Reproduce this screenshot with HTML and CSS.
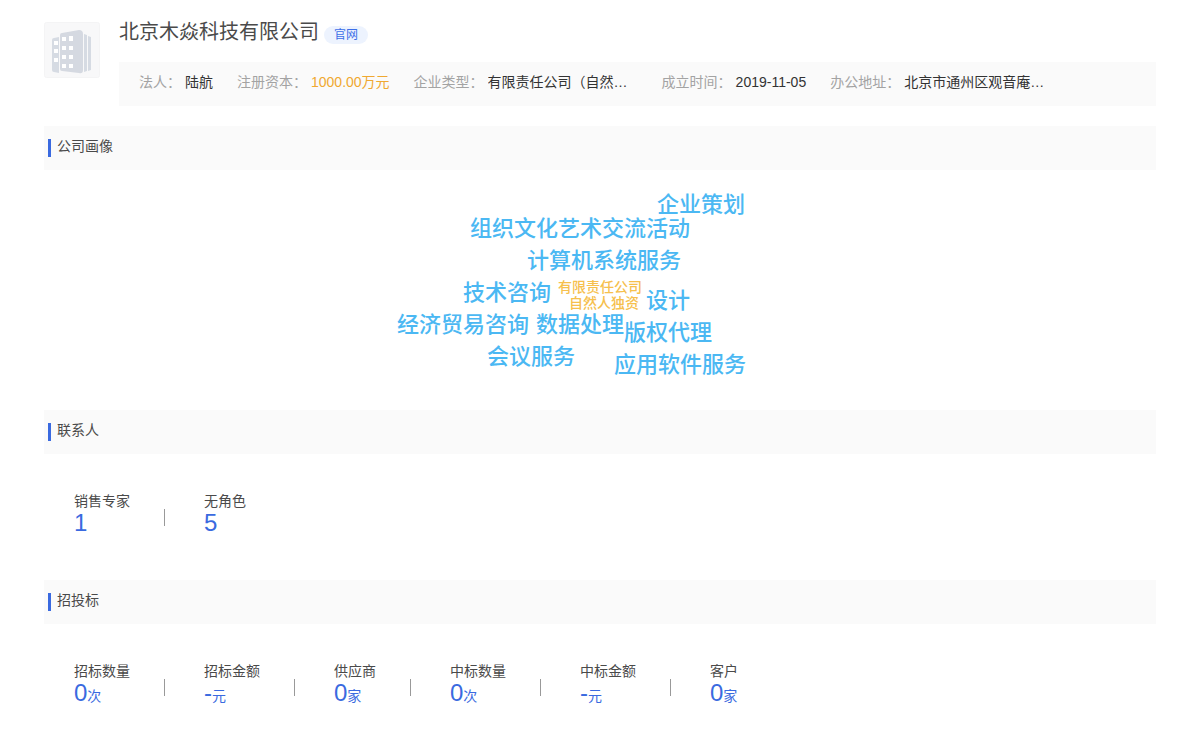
FILE: index.html
```html
<!DOCTYPE html>
<html lang="zh-CN">
<head>
<meta charset="utf-8">
<title>北京木焱科技有限公司</title>
<link rel="stylesheet" href="styles.css">
</head>
<body>
<main class="page">
  <header class="company">
    <svg class="logo" viewBox="0 0 56 56" aria-hidden="true">
      <rect x=".5" y=".5" width="55" height="55" rx="2" fill="#f8f8f9" stroke="#f4f4f5"/>
      <path d="M8 18q0-2 2-2l5-1v36l-5-1q-2 0-2-2z" fill="#d6dbe3"/>
      <path d="M16 13q0-2 2-2l17-3q4 0 4 4v36q0 4-4 3l-17-2q-2 0-2-2z" fill="#d5d9e1"/>
      <path d="M40 12l3 1v36l-3 1zM44 14l3 1v33l-3 1z" fill="#d6dbe3"/>
      <path d="M10 19h4v4h-4zM10 27h4v4h-4zM10 36h4v4h-4zM18 15h4v4h-4zM25 14h4v5h-4zM18 24h4v4h-4zM25 24h4v4h-4zM18 33h4v4h-4zM25 33h4v4h-4zM18 42h4v4h-4zM25 42h4v4h-4z" fill="#fff"/>
    </svg>
    <div class="summary">
      <div class="title-row">
        <h1 class="title">北京木焱科技有限公司</h1>
        <a class="site" href="#">官网</a>
      </div>
      <dl class="meta">
        <div class="meta-item"><dt>法人：</dt><dd>陆航</dd></div>
        <div class="meta-item"><dt>注册资本：</dt><dd class="capital">1000.00万元</dd></div>
        <div class="meta-item"><dt>企业类型：</dt><dd class="clipped">有限责任公司（自然…</dd></div>
        <div class="meta-item"><dt>成立时间：</dt><dd>2019-11-05</dd></div>
        <div class="meta-item"><dt>办公地址：</dt><dd class="clipped">北京市通州区观音庵…</dd></div>
      </dl>
    </div>
  </header>

  <section>
    <h2 class="heading">公司画像</h2>
    <div class="cloud">
      <span class="word w1">企业策划</span>
      <span class="word w2">组织文化艺术交流活动</span>
      <span class="word w3">计算机系统服务</span>
      <span class="word w4">技术咨询</span>
      <span class="word minor w5">有限责任公司</span>
      <span class="word minor w6">自然人独资</span>
      <span class="word w7">设计</span>
      <span class="word w8">经济贸易咨询</span>
      <span class="word w9">数据处理</span>
      <span class="word w10">版权代理</span>
      <span class="word w11">会议服务</span>
      <span class="word w12">应用软件服务</span>
    </div>
  </section>

  <section>
    <h2 class="heading">联系人</h2>
    <dl class="stats">
      <div class="stat"><dt>销售专家</dt><dd>1</dd></div>
      <div class="stat"><dt>无角色</dt><dd>5</dd></div>
    </dl>
  </section>

  <section>
    <h2 class="heading">招投标</h2>
    <dl class="stats">
      <div class="stat"><dt>招标数量</dt><dd>0<small>次</small></dd></div>
      <div class="stat"><dt>招标金额</dt><dd>-<small>元</small></dd></div>
      <div class="stat"><dt>供应商</dt><dd>0<small>家</small></dd></div>
      <div class="stat"><dt>中标数量</dt><dd>0<small>次</small></dd></div>
      <div class="stat"><dt>中标金额</dt><dd>-<small>元</small></dd></div>
      <div class="stat"><dt>客户</dt><dd>0<small>家</small></dd></div>
    </dl>
  </section>
</main>
</body>
</html>
```
FILE: styles.css
```css
* {
  box-sizing: border-box;
}

body {
  margin: 0;
  background: #fff;
  color: #4a4a4a;
  font: 14px/20px "Liberation Sans", "Noto Sans CJK SC", sans-serif;
}

h1, h2, dl, dd {
  margin: 0;
  font-weight: 400;
}

.page {
  padding: 18px 44px;
}

.company {
  display: flex;
  gap: 19px;
  margin-bottom: 20px;
}

.logo {
  flex: none;
  width: 56px;
  height: 56px;
  margin-top: 4px;
}

.summary {
  flex: 1;
  min-width: 0;
}

.title-row {
  display: flex;
  align-items: flex-end;
  gap: 5px;
  margin-bottom: 16px;
}

.title {
  font-size: 20px;
  line-height: 28px;
}

.site {
  margin-bottom: 2px;
  padding: 0 10px;
  border-radius: 9px;
  background: #edf3fe;
  color: #3d6fe8;
  font-size: 12px;
  line-height: 18px;
  text-decoration: none;
}

.meta {
  display: flex;
  gap: 24px;
  padding: 10px 20px 14px;
  background: #fafafa;
  white-space: nowrap;
}

.meta-item {
  display: flex;
  gap: 4px;
}

.meta dt {
  color: #a3a3a3;
}

.meta dd {
  color: #333;
}

.meta .capital {
  color: #f0a830;
}

.clipped {
  width: 150px;
  overflow: hidden;
}

.heading {
  display: flex;
  align-items: center;
  gap: 6px;
  height: 44px;
  padding: 0 4px 4px;
  background: #fafafa;
  font-size: 14px;
}

.heading::before {
  content: "";
  width: 3px;
  height: 18px;
  margin-top: 4px;
  background: #3a6ae0;
}

.cloud {
  position: relative;
  width: 400px;
  height: 240px;
  margin: 0 auto;
}

.word {
  position: absolute;
  color: #4bb8f3;
  font-size: 22px;
  font-weight: 500;
  line-height: 32px;
  white-space: nowrap;
}

.minor {
  color: #f6c04d;
  font-size: 14px;
  line-height: 16px;
}

.w1 { left: 257px; top: 19px; }
.w2 { left: 70px; top: 43px; }
.w3 { left: 127px; top: 75px; }
.w4 { left: 63px; top: 107px; }
.w5 { left: 158px; top: 109px; }
.w6 { left: 169px; top: 125px; }
.w7 { left: 246px; top: 115px; }
.w8 { left: -3px; top: 139px; }
.w9 { left: 136px; top: 139px; }
.w10 { left: 224px; top: 147px; }
.w11 { left: 87px; top: 171px; }
.w12 { left: 214px; top: 179px; }

.stats {
  display: flex;
  padding: 37px 30px 45px;
}

.stat {
  display: flex;
  flex-direction: column;
  position: relative;
  padding-right: 74px;
}

.stat:not(:last-child)::after {
  content: "";
  position: absolute;
  right: 39px;
  top: 18px;
  width: 1px;
  height: 17px;
  background: #999;
}

.stat dd {
  color: #3a6ae0;
  font-size: 24px;
  line-height: 24px;
}

.stat small {
  font-size: 14px;
  line-height: 20px;
}
```
